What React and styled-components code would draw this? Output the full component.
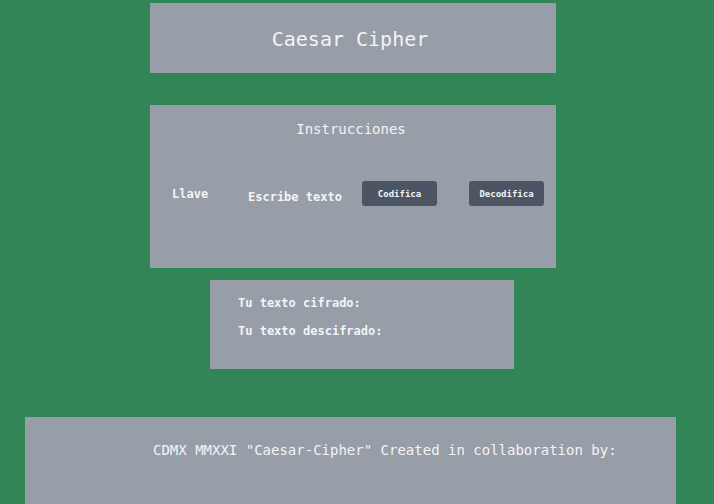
import styled, { createGlobalStyle } from "styled-components";

const GlobalStyle = createGlobalStyle`
  html, body {
    margin: 0;
    padding: 0;
    background-color: #318556;
  }
  body {
    font-family: "DejaVu Sans Mono", monospace;
    color: #f3f4f6;
    overflow: hidden;
  }
`;

const Page = styled.main`
  width: 714px;
  height: 504px;
  padding-top: 3px;
  box-sizing: border-box;
  display: flex;
  flex-direction: column;
  overflow: hidden;
`;

// panel gris, ancho y posición vienen por props
const Panel = styled.section`
  background-color: #979ea8;
  width: ${(p) => p.$width}px;
  height: ${(p) => p.$height}px;
  margin-left: ${(p) => p.$left}px;
  margin-top: ${(p) => p.$top || 0}px;
  box-sizing: border-box;
  flex-shrink: 0;
`;

const Header = styled(Panel)`
  display: flex;
  align-items: center;
  justify-content: center;
  padding: 2px 6px 0 0;
`;

const Title = styled.h1`
  margin: 0;
  font-size: 20px;
  font-weight: 400;
`;

const Instructions = styled(Panel)`
  padding-top: 16px;
`;

const SubTitle = styled.h2`
  margin: 0;
  font-size: 14px;
  font-weight: 400;
  text-align: center;
  padding-right: 4px;
`;

const Controls = styled.div`
  display: grid;
  grid-template-columns: 76px 114px 107px 75px;
  align-items: center;
  padding-left: 22px;
  margin-top: 44px;
`;

const Label = styled.span`
  font-size: 12px;
  font-weight: 700;
  padding-top: ${(p) => p.$drop || 0}px;
`;

const Button = styled.button`
  width: 75px;
  height: 25px;
  padding: 0;
  border: none;
  border-radius: 3px;
  background-color: #4b5563;
  color: #f3f4f6;
  font-family: "DejaVu Sans Mono", monospace;
  font-size: 9px;
  font-weight: 700;
  cursor: pointer;
`;

const Output = styled(Panel)`
  padding: 16px 0 0 28px;
  display: flex;
  flex-direction: column;
  gap: 13px;
`;

const OutputLine = styled.p`
  margin: 0;
  font-size: 12px;
  font-weight: 700;
  line-height: 15px;
`;

const Footer = styled(Panel)`
  padding: 25px 0 0 128px;
`;

const Credits = styled.p`
  margin: 0;
  font-size: 14px;
  line-height: 17px;
`;

export default function App() {
  return (
    <>
      <GlobalStyle />
      <Page>
        <Header $width={406} $height={70} $left={150}>
          <Title>Caesar Cipher</Title>
        </Header>

        <Instructions $width={406} $height={163} $left={150} $top={32}>
          <SubTitle>Instrucciones</SubTitle>
          <Controls>
            <Label>Llave</Label>
            <Label $drop={7}>Escribe texto</Label>
            <Button>Codifica</Button>
            <Button>Decodifica</Button>
          </Controls>
        </Instructions>

        <Output $width={304} $height={89} $left={210} $top={12}>
          <OutputLine>Tu texto cifrado:</OutputLine>
          <OutputLine>Tu texto descifrado:</OutputLine>
        </Output>

        <Footer $width={651} $height={100} $left={25} $top={48}>
          <Credits>CDMX MMXXI "Caesar-Cipher" Created in collaboration by:</Credits>
        </Footer>
      </Page>
    </>
  );
}
